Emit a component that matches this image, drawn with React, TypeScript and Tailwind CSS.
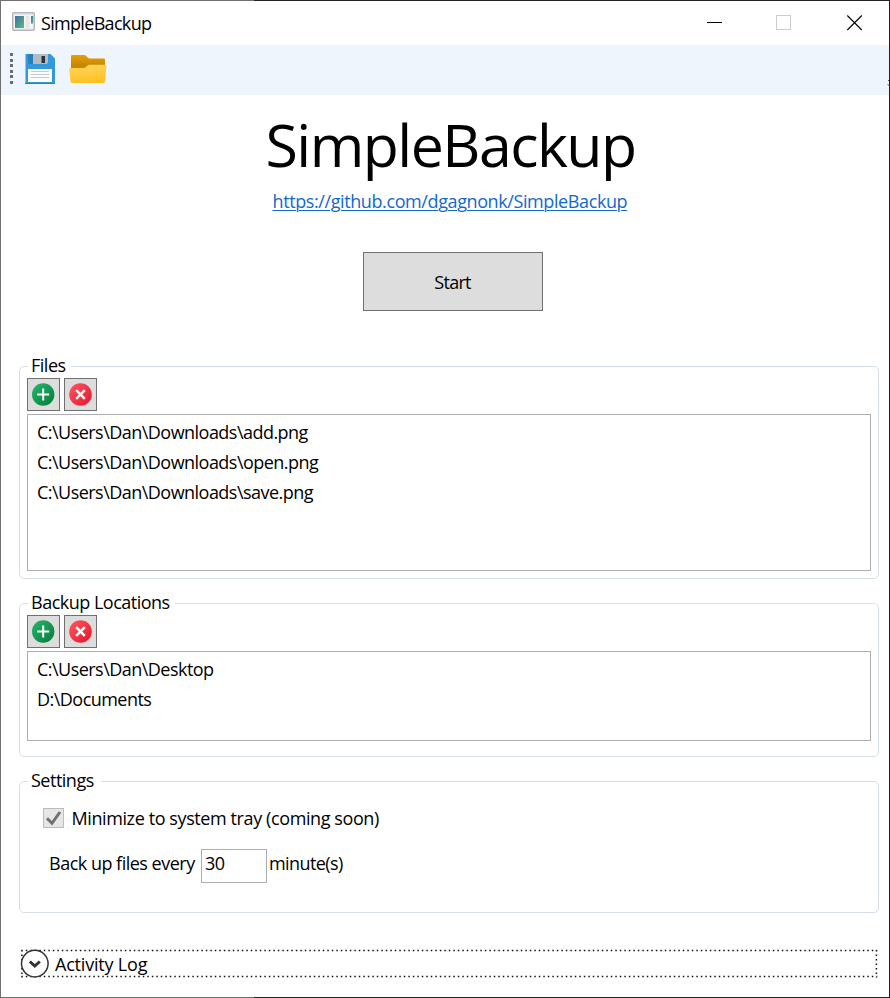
import React from "react";

const TEXT = "whitespace-pre text-[18px] leading-6 text-black";
const ROW = "h-[30px] whitespace-pre text-[18px] leading-[30px] tracking-[-0.53px] text-black";

function AppIcon() {
  return (
    <svg width="23" height="19" viewBox="0 0 23 19">
      <defs>
        <linearGradient id="appPane" x1="0" y1="0" x2="1" y2="1">
          <stop offset="0" stopColor="#3f6fa0" />
          <stop offset="0.5" stopColor="#4a968f" />
          <stop offset="1" stopColor="#62b878" />
        </linearGradient>
      </defs>
      <rect x="0.7" y="0.7" width="21.6" height="17.6" rx="1" fill="#dfe3e7" stroke="#b0b4b8" strokeWidth="1.3" />
      <rect x="2" y="3" width="19" height="13.5" fill="#f6f6f6" />
      <rect x="3" y="4" width="9" height="12" fill="url(#appPane)" />
      <rect x="13.5" y="4" width="4" height="12" fill="#e6e8e8" />
      <rect x="19" y="4" width="2.2" height="7.5" fill="url(#appPane)" />
    </svg>
  );
}

function SaveIcon() {
  return (
    <svg width="30" height="30" viewBox="0 0 30 30">
      <path d="M0.5 0H25.5L30 4.5v25H0.5z" fill="#3498db" />
      <path d="M0 29h30v1H0z" fill="#2980b9" />
      <path d="M3 0h5v10H5a2 2 0 0 1-2-2z" fill="#2980b9" />
      <path d="M8 0h15v8a2 2 0 0 1-2 2H8z" fill="#b3bcc2" />
      <rect x="16.5" y="2" width="3.5" height="7" fill="#2c3338" />
      <path d="M3 15h24v13H3z" fill="#fafcfc" />
      <path d="M6 17.5h18M6 20.5h18M6 23.5h18" stroke="#c4c9cc" strokeWidth="1.2" />
    </svg>
  );
}

function FolderIcon() {
  return (
    <svg width="38" height="29" viewBox="0 0 38 29">
      <defs>
        <linearGradient id="folderBack" x1="0" y1="0" x2="0" y2="1">
          <stop offset="0" stopColor="#e6a000" />
          <stop offset="0.5" stopColor="#c98700" />
        </linearGradient>
        <linearGradient id="folderFront" x1="0" y1="0" x2="0.2" y2="1">
          <stop offset="0" stopColor="#ffd562" />
          <stop offset="1" stopColor="#ffc222" />
        </linearGradient>
      </defs>
      <path d="M2 1.4Q2 0 3.4 0h12q1 0 1.6.7l2 2.1q.5.6 1.4.6h14.2q1.4 0 1.4 1.4V20H2z" fill="url(#folderBack)" />
      <path d="M1.2 13h13.6q1 0 1.8-.7l2-1.8q.8-.7 1.8-.7h15.6q1.5 0 1.4 1.4L36 26.7q-.1 1.3-1.6 1.3H3.2q-1.5 0-1.6-1.3L.2 14.4q-.1-1.4 1-1.4z" fill="url(#folderFront)" />
    </svg>
  );
}

function AddIcon() {
  return (
    <svg width="23" height="23" viewBox="0 0 23 23">
      <defs>
        <linearGradient id="addFill" x1="0" y1="0" x2="1" y2="1">
          <stop offset="0.15" stopColor="#21ad64" />
          <stop offset="0.85" stopColor="#0b8443" />
        </linearGradient>
      </defs>
      <circle cx="11.2" cy="11.5" r="11.2" fill="url(#addFill)" />
      <path d="M11.2 5.5v12M5.2 11.5h12" stroke="#fff" strokeWidth="2" />
    </svg>
  );
}

function RemoveIcon() {
  return (
    <svg width="23" height="23" viewBox="0 0 23 23">
      <defs>
        <linearGradient id="removeFill" x1="0" y1="0" x2="1" y2="1">
          <stop offset="0.15" stopColor="#fa4e5c" />
          <stop offset="0.85" stopColor="#e81f34" />
        </linearGradient>
      </defs>
      <circle cx="11.5" cy="11.5" r="11.3" fill="url(#removeFill)" />
      <path d="M7.2 7.2l8.6 8.6M15.8 7.2l-8.6 8.6" stroke="#fff" strokeWidth="2.5" />
    </svg>
  );
}

function ListButtons() {
  const cls = "flex size-[33px] items-center justify-center border border-[#707070] bg-[#dddddd]";
  return (
    <div className="flex gap-1">
      <button className={cls}><AddIcon /></button>
      <button className={cls}><RemoveIcon /></button>
    </div>
  );
}

function Group({ title, width, className, children }: { title: string; width: string; className: string; children: React.ReactNode }) {
  return (
    <fieldset className={`ml-[18px] mr-[10px] min-w-0 shrink-0 rounded-[5px] border border-[#d5dfe5] ${className}`}>
      <legend className={`ml-[8px] h-6 pl-[3px] ${width}`}>
        <span className={`${TEXT} -mt-px block tracking-[-0.5px]`}>{title}</span>
      </legend>
      {children}
    </fieldset>
  );
}

export default function App() {
  return (
    <div className="flex h-[998px] w-[890px] flex-col bg-white font-['Open_Sans','Noto_Sans',sans-serif]">
      <div className="flex h-px shrink-0"><div className="w-[254px] bg-[#707070]" /><div className="flex-1 bg-[#222222]" /></div>
      <div className="flex min-h-0 flex-1 flex-col border-l border-r border-l-[#707070] border-r-[#222222]">
        <header className="flex h-11 shrink-0 items-center pl-[11px]">
          <div className="-mt-[3px]"><AppIcon /></div>
          <span className={`${TEXT} -mt-px ml-[6px] tracking-[-0.68px]`}>SimpleBackup</span>
          <svg className="ml-auto mr-[25px]" width="158" height="17" viewBox="0 0 158 17" fill="none" shapeRendering="crispEdges">
            <path d="M1 7.5h15" stroke="#000" />
            <rect x="70.5" y="0.5" width="14" height="14" stroke="#cccccc" />
            <path d="M141.3 .5l14.5 14.5M155.8 .5l-14.5 14.5" stroke="#000" strokeWidth="1.1" shapeRendering="auto" />
          </svg>
        </header>
        <div className="flex h-[50px] shrink-0 items-start bg-[#eef5fd]">
          <svg className="ml-[9px] mt-[8px]" width="3" height="31" shapeRendering="crispEdges">
            <path d="M1.5 0v31" stroke="#6a6d72" strokeWidth="3" strokeDasharray="3 2.6" />
          </svg>
          <div className="ml-3 mt-[9px]"><SaveIcon /></div>
          <div className="ml-[14px] mt-[10px]"><FolderIcon /></div>
          <svg className="ml-auto mt-[35px]" width="2" height="7" shapeRendering="crispEdges">
            <path d="M1 0h1v1H1z" fill="#555" /><path d="M0 4h2v1H0zM1 5h1v1H1z" fill="#aaa" />
          </svg>
        </div>
        <h1 className="mt-[12px] h-[74px] whitespace-pre pl-[264.5px] text-[59px] leading-[74px] tracking-[-1.53px] text-black">SimpleBackup</h1>
        <a className="ml-[271.5px] mt-[8px] h-6 self-start whitespace-pre text-[18px] leading-6 tracking-[-0.4px] text-[#1268cc] underline decoration-1 underline-offset-2">https://github.com/dgagnonk/SimpleBackup</a>
        <button className="ml-[362px] mt-[39px] flex h-[59px] w-[180px] shrink-0 items-center justify-center border border-[#707070] bg-[#dddddd]">
          <span className={`${TEXT} mr-px tracking-[-0.75px]`}>Start</span>
        </button>

        <Group title="Files" width="w-[43px]" className="mt-[43px] h-[225px]">
          <div className="px-[7px]">
            <ListButtons />
            <div className="mt-[3px] flex h-[157px] flex-col border border-[#abadb3] pl-[9px] pt-[2px]">
              <span className={ROW}>C:\Users\Dan\Downloads\add.png</span>
              <span className={ROW}>C:\Users\Dan\Downloads\open.png</span>
              <span className={ROW}>C:\Users\Dan\Downloads\save.png</span>
            </div>
          </div>
        </Group>

        <Group title="Backup Locations" width="w-[147px]" className="mt-[12px] h-[166px]">
          <div className="px-[7px]">
            <ListButtons />
            <div className="mt-[3px] flex h-[90px] flex-col border border-[#abadb3] pl-[9px] pt-[2px]">
              <span className={ROW}>C:\Users\Dan\Desktop</span>
              <span className={ROW}>D:\Documents</span>
            </div>
          </div>
        </Group>

        <Group title="Settings" width="w-[73px]" className="mt-[12px] h-[144px]">
          <div className="ml-[23px] mt-[13px] flex h-6 items-center">
            <svg width="21" height="20" viewBox="0 0 21 20">
              <rect x="0.5" y="0.5" width="20" height="19" fill="#e6e6e6" stroke="#bcbcbc" />
              <path d="M4 10.3l5 5L17 4" fill="none" stroke="#707070" strokeWidth="3" />
            </svg>
            <span className={`${TEXT} ml-[7.5px] tracking-[-0.4px]`}>Minimize to system tray (coming soon)</span>
          </div>
          <div className="ml-[29px] mt-[19px] flex h-[34px]">
            <span className={`${TEXT} mt-[2px] w-[152px] tracking-[-0.5px]`}>Back up files every</span>
            <div className="h-[34px] w-[66px] border border-[#abadb3] pl-[3px] pt-[1px]">
              <span className={`${TEXT} block tracking-[-0.6px]`}>30</span>
            </div>
            <span className={`${TEXT} ml-[2px] mt-[2px] tracking-[-0.6px]`}>minute(s)</span>
          </div>
        </Group>

        <div className="ml-[19px] mt-[36px] flex h-[30px] shrink-0 items-center">
          <div className="relative flex h-[30px] w-[857px] items-center">
            <svg className="absolute left-0 top-0" width="858" height="30">
              <path d="M1.3 1.6h856M1.3 27.6h856M1.9 1v27.5M856.4 1v27.5" fill="none" stroke="#111" strokeWidth="1.5" strokeDasharray="1.5 3" />
            </svg>
            <svg className="relative" width="30" height="30" viewBox="0 0 30 30" fill="none">
              <circle cx="14.8" cy="14.6" r="13.3" fill="#fff" stroke="#333" strokeWidth="1.5" />
              <path d="M9.8 12.5l5 4.5 5-4.5" stroke="#333" strokeWidth="3" />
            </svg>
            <span className={`${TEXT} ml-[5px] tracking-[-0.2px]`}>Activity Log</span>
          </div>
        </div>
      </div>
      <div className="flex h-px shrink-0"><div className="w-[254px] bg-[#707070]" /><div className="flex-1 bg-[#222222]" /></div>
    </div>
  );
}
